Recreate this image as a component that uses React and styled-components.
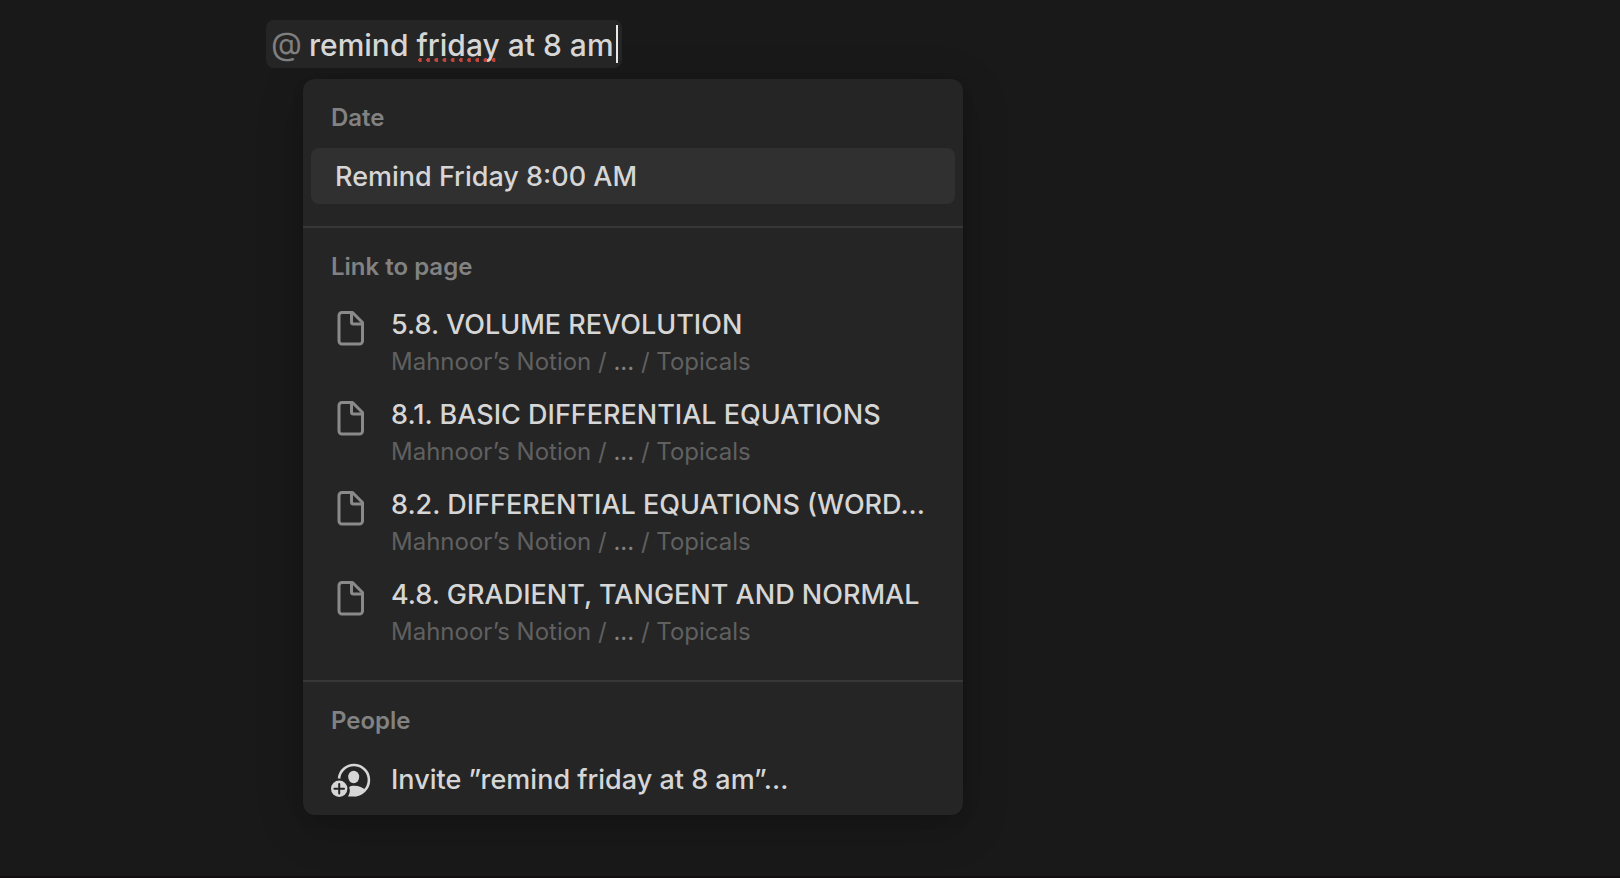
import React, { useState } from "react";
import styled, { createGlobalStyle } from "styled-components";

const GlobalStyle = createGlobalStyle`
  *, *::before, *::after { box-sizing: border-box; }
  body {
    margin: 0;
    min-height: 100vh;
    border-bottom: 2px solid #130f11;
    background: #191919;
    color: #d6d6d6;
    font-family: Inter, "Liberation Sans", sans-serif;
  }
  button, input { font: inherit; color: inherit; }
`;

const Page = styled.main`
  display: flex;
  flex-direction: column;
  align-items: flex-start;
  gap: 11px;
  padding: 20px 24px 48px 266px;
`;

const Mention = styled.label`
  position: relative;
  display: flex;
  align-items: center;
  height: 48px;
  padding: 0 4px 0 5px;
  border-radius: 8px;
  background: #252525;
  line-height: 40px;
`;

const AtSign = styled.span`
  width: 38px;
  color: #7f7f7f;
  font-size: 32px;
`;

const MentionInput = styled.input`
  field-sizing: content;
  height: 40px;
  padding: 2px 2px 0 0;
  border: 0;
  outline: 0;
  background: transparent;
  font-size: 30px;
  font-weight: 500;
`;

const Caret = styled.span`
  width: 2px;
  height: 38px;
  background: #e8e8e8;
`;

const SpellingMark = styled.span`
  position: absolute;
  left: 152px;
  bottom: 6px;
  width: 82px;
  height: 4px;
  background: radial-gradient(circle at 2px 2px, #c4453c 2px, transparent 2px) 0 0 / 8px 4px round;
`;

const Menu = styled.div`
  width: min(660px, 100% - 37px);
  margin-left: 37px;
  border-radius: 12px;
  background: #252525;
  box-shadow: 0 12px 48px rgba(0, 0, 0, 0.2), 0 4px 12px rgba(0, 0, 0, 0.1);
`;

const Section = styled.section`
  padding: 24px 8px ${(p) => p.$bottom}px;

  & + & { border-top: 2px solid #373737; }
`;

const Heading = styled.h2`
  margin: 0 0 15px;
  padding: 0 20px;
  color: #828282;
  font-size: 24px;
  font-weight: 600;
  line-height: 30px;
`;

const Row = styled.button`
  display: flex;
  align-items: flex-start;
  gap: 20px;
  width: 100%;
  padding: 8px 20px;
  border: 0;
  border-radius: 8px;
  background: ${(p) => (p.$active ? "#303030" : "transparent")};
  text-align: left;
  cursor: pointer;
`;

const SimpleRow = styled(Row)`
  align-items: center;
  height: 56px;
  padding: 10px ${(p) => (p.$active ? 24 : 20)}px 8px;
`;

const IconSlot = styled.span`
  flex: none;
  display: flex;
  justify-content: center;
  width: 40px;
`;

const PageIcon = styled.svg`
  width: 28px;
  height: 36px;
  margin-top: 5px;
  fill: none;
  stroke: #8a8a8a;
  stroke-width: 3;
  stroke-linejoin: round;
`;

const Labels = styled.span`
  flex: 1;
  min-width: 0;
`;

const Title = styled.span`
  display: block;
  overflow: hidden;
  font-size: 27px;
  font-weight: 500;
  line-height: 40px;
  text-overflow: ellipsis;
  white-space: nowrap;
`;

const Trail = styled.span`
  display: block;
  color: #606060;
  font-size: 24px;
  line-height: 34px;
`;

const Dots = styled.span`
  color: #828282;
`;

const pages = [
  "5.8. VOLUME REVOLUTION",
  "8.1. BASIC DIFFERENTIAL EQUATIONS",
  "8.2. DIFFERENTIAL EQUATIONS (WORD...",
  "4.8. GRADIENT, TANGENT AND NORMAL",
];

function InviteIcon() {
  return (
    <svg width="40" height="36" viewBox="0 0 40 36" aria-hidden="true">
      <path d="M8 16.5A15 15 0 1 1 23 33" fill="none" stroke="#d6d6d6" strokeWidth="2.6" />
      <ellipse cx="22.7" cy="15" rx="5.5" ry="6.2" fill="#d6d6d6" />
      <path d="M17 34.4A10.5 10.5 0 0 0 18.2 25.2C19 24.2 21 23.8 23 23.8c5 0 9 1.9 11.3 4.2C31.5 32 27.5 34.6 23 34.6Z" fill="#d6d6d6" />
      <circle cx="8.2" cy="26.8" r="8.2" fill="#d6d6d6" />
      <path d="M8.2 22v9.6M3.4 26.8h9.6" stroke="#252525" strokeWidth="2" strokeLinecap="round" />
    </svg>
  );
}

export default function App() {
  const [query, setQuery] = useState("remind friday at 8 am");
  return (
    <>
      <GlobalStyle />
      <Page>
        <Mention>
          <AtSign>@</AtSign>
          <MentionInput
            aria-label="Mention a person, page or date"
            spellCheck={false}
            value={query}
            onChange={(e) => setQuery(e.target.value)}
          />
          <Caret />
          <SpellingMark />
        </Mention>
        <Menu>
          <Section $bottom={22}>
            <Heading>Date</Heading>
            <SimpleRow $active>
              <Title>Remind Friday 8:00 AM</Title>
            </SimpleRow>
          </Section>
          <Section $bottom={23}>
            <Heading>Link to page</Heading>
            {pages.map((title) => (
              <Row key={title}>
                <IconSlot>
                  <PageIcon viewBox="0 0 28 36" aria-hidden="true">
                    <path d="M5 2.5H15.5L25.5 12.5V31a3 3 0 0 1-3 3H5a3 3 0 0 1-3-3V5.500a3 3 0 0 1 3-3Z" />
                    <path d="M14.5 3V12a2 2 0 0 0 2 2H25" />
                  </PageIcon>
                </IconSlot>
                <Labels>
                  <Title>{title}</Title>
                  <Trail>
                    Mahnoor’s Notion / <Dots>...</Dots> / Topicals
                  </Trail>
                </Labels>
              </Row>
            ))}
          </Section>
          <Section $bottom={8}>
            <Heading>People</Heading>
            <SimpleRow>
              <IconSlot>
                <InviteIcon />
              </IconSlot>
              <Title>Invite ”{query}”...</Title>
            </SimpleRow>
          </Section>
        </Menu>
      </Page>
    </>
  );
}
